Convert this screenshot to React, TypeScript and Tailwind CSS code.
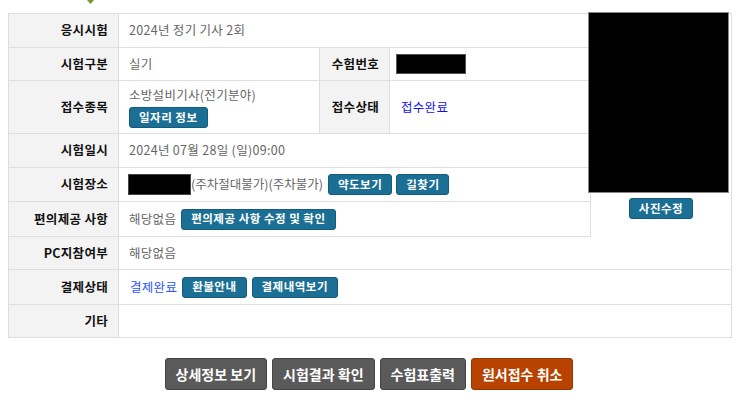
import React from "react";

const font = { fontFamily: '"Noto Sans CJK KR", "Noto Sans", sans-serif' };

const Label = ({ children, w = "w-[110px]" }: { children: React.ReactNode; w?: string }) => (
  <div className={`${w} shrink-0 flex items-center justify-end pr-[10px] bg-[#f3f3f3] border-r border-[#dedede] text-[12.5px] font-bold text-[#111] leading-none tracking-[0.3px]`}>
    {children}
  </div>
);

const SmallBtn = ({ children }: { children: React.ReactNode }) => (
  <button className="h-[21px] px-[9px] rounded-[3px] bg-[#1b6f94] border border-[#135c7d] text-white text-[11.5px] font-bold leading-none whitespace-nowrap tracking-[0.5px]">
    {children}
  </button>
);

const BigBtn = ({ children, orange }: { children: React.ReactNode; orange?: boolean }) => (
  <button
    className={`h-[32px] px-[10px] rounded-[3px] border text-white text-[14px] font-bold leading-none whitespace-nowrap ${
      orange ? "bg-[#b84200] border-[#973600]" : "bg-[#5a5a5a] border-[#444]"
    }`}
  >
    {children}
  </button>
);

export default function App() {
  return (
    <div className="w-[738px] h-[397px] bg-white overflow-hidden" style={font}>
      {/* little marker at the top */}
      <div className="h-[13px] pl-[87px]">
        <svg width="7" height="4" viewBox="0 0 7 4">
          <polygon points="0,0 7,0 3.5,4" fill="#6e9a2a" />
        </svg>
      </div>

      <div className="ml-[8px] w-[724px] border border-[#dedede] text-[12.5px] text-[#666] tracking-[0.3px]">
        <div className="flex">
          <div className="w-[582px] border-r border-[#dedede]">
            <div className="flex h-[34px] border-b border-[#dedede]">
              <Label>응시시험</Label>
              <div className="flex items-center pl-[10px]">2024년 정기 기사 2회</div>
            </div>
            <div className="flex h-[33px] border-b border-[#dedede]">
              <Label>시험구분</Label>
              <div className="w-[201px] flex items-center pl-[10px] border-r border-[#dedede]">실기</div>
              <Label w="w-[70px]">수험번호</Label>
              <div className="flex items-center pl-[6px]">
                <div className="w-[70px] h-[20px] bg-black border border-[#555]" />
              </div>
            </div>
            <div className="flex h-[53px] border-b border-[#dedede]">
              <Label>접수종목</Label>
              <div className="w-[201px] flex flex-col justify-center items-start gap-[3px] pl-[10px] border-r border-[#dedede]">
                <span>소방설비기사(전기분야)</span>
                <SmallBtn>일자리 정보</SmallBtn>
              </div>
              <Label w="w-[70px]">접수상태</Label>
              <div className="flex items-center pl-[11px] text-[#1414f0]">접수완료</div>
            </div>
            <div className="flex h-[34px] border-b border-[#dedede]">
              <Label>시험일시</Label>
              <div className="flex items-center pl-[10px]">2024년 07월 28일 (일)09:00</div>
            </div>
            <div className="flex h-[34px] border-b border-[#dedede]">
              <Label>시험장소</Label>
              <div className="flex items-center pl-[9px]">
                <div className="w-[63px] h-[21px] bg-black border border-[#444]" />
                <span className="tracking-normal">(주차절대불가)(주차불가)</span>
                <div className="flex gap-[4px] ml-[5px]">
                  <SmallBtn>약도보기</SmallBtn>
                  <SmallBtn>길찾기</SmallBtn>
                </div>
              </div>
            </div>
            <div className="flex h-[35px] border-b border-[#dedede]">
              <Label>편의제공 사항</Label>
              <div className="flex items-center gap-[5px] pl-[10px]">
                <span>해당없음</span>
                <SmallBtn>편의제공 사항 수정 및 확인</SmallBtn>
              </div>
            </div>
          </div>
          <div className="flex-1 flex flex-col items-start">
            <div className="-ml-[3px] -mt-[2px] w-[141px] h-[181px] bg-black border border-[#888]" />
            <div className="self-center mt-[5px]">
              <SmallBtn>사진수정</SmallBtn>
            </div>
          </div>
        </div>

        <div className="flex h-[33px] border-b border-[#dedede]">
          <Label>PC지참여부</Label>
          <div className="flex items-center pl-[10px]">해당없음</div>
        </div>
        <div className="flex h-[35px] border-b border-[#dedede]">
          <Label>결제상태</Label>
          <div className="flex items-center gap-[5px] pl-[11px]">
            <span className="text-[#2a55ff]">결제완료</span>
            <SmallBtn>환불안내</SmallBtn>
            <SmallBtn>결제내역보기</SmallBtn>
          </div>
        </div>
        <div className="flex h-[32px]">
          <Label>기타</Label>
          <div className="flex-1" />
        </div>
      </div>

      <div className="mt-[20px] flex justify-center gap-[5px]">
        <BigBtn>상세정보 보기</BigBtn>
        <BigBtn>시험결과 확인</BigBtn>
        <BigBtn>수험표출력</BigBtn>
        <BigBtn orange>원서접수 취소</BigBtn>
      </div>
    </div>
  );
}
